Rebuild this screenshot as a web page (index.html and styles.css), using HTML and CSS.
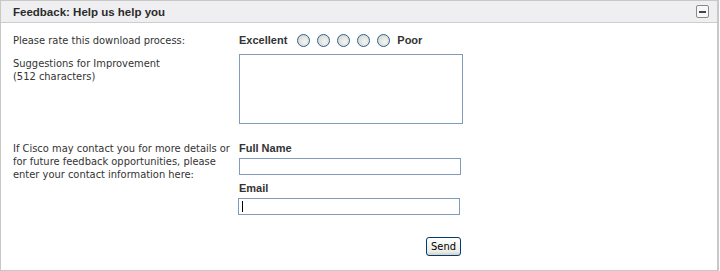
FILE: index.html
```html
<!DOCTYPE html>
<html lang="en">
<head>
    <meta charset="UTF-8">
    <title>Feedback</title>
    <link rel="stylesheet" href="styles.css">
</head>
<body>
    <div class="panel">
        <div class="panel-head">
            <span class="panel-title">Feedback: Help us help you</span>
            <span class="collapse"><span class="minus"></span></span>
        </div>

        <div class="panel-body">
            <div class="row rate-row">
                <div class="label">Please rate this download process:</div>
                <div class="field rating">
                    <b class="excellent">Excellent</b>
                    <input type="radio" name="rate" class="radio">
                    <input type="radio" name="rate" class="radio">
                    <input type="radio" name="rate" class="radio">
                    <input type="radio" name="rate" class="radio">
                    <input type="radio" name="rate" class="radio">
                    <b>Poor</b>
                </div>
            </div>

            <div class="row suggest-row">
                <div class="label">Suggestions for Improvement<br>(512 characters)</div>
                <div class="field"><textarea class="suggest"></textarea></div>
            </div>

            <div class="row contact-row">
                <div class="label">If Cisco may contact you for more details or<br>for future feedback opportunities, please<br>enter your contact information here:</div>
                <div class="field">
                    <div class="field-name">Full Name</div>
                    <input type="text" class="text-in">
                    <div class="field-name email-name">Email</div>
                    <div class="text-in email-in"><span class="caret"></span></div>
                </div>
            </div>

            <div class="row send-row">
                <div class="label"></div>
                <div class="field send-field"><button class="send">Send</button></div>
            </div>
        </div>
    </div>
</body>
</html>
```

FILE: styles.css
```css
body {
    margin: 0;
    font-family: Tahoma, "DejaVu Sans Condensed", "Liberation Sans", sans-serif;
    font-size: 11px;
    color: #333;
    background: #fff;
}
.panel {
    width: 716px;
    height: 269px;
    border: 1px solid #c8c8c8;
    border-right: 2px solid #c8c8c8;
}
.panel-head {
    height: 21px;
    background: #efeff1;
    border-bottom: 1px solid #cdcdcd;
    display: flex;
    align-items: center;
    justify-content: space-between;
    padding: 0 8px 0 12px;
}
.panel-title {
    font-family: "Liberation Sans", Arial, sans-serif;
    font-weight: bold;
    font-size: 11.5px;
    color: #2b2b2b;
}
.collapse {
    width: 11px;
    height: 11px;
    border: 1px solid #8a8a8a;
    border-radius: 2px;
    background: #f7f7f7;
    display: flex;
    align-items: center;
    justify-content: center;
}
.minus {
    width: 7px;
    height: 2px;
    background: #444;
}
.panel-body {
    padding: 8px 0 0 12px;
}
.row {
    display: grid;
    grid-template-columns: 226px 240px;
}
.label {
    line-height: 13px;
    white-space: nowrap;
}
.rate-row {
    align-items: center;
    height: 18px;
}
.rating {
    display: flex;
    align-items: center;
    gap: 7px;
}
.rating b {
    font-family: "Liberation Sans", Arial, sans-serif;
    font-size: 11px;
}
.rating .excellent {
    margin-right: 3px;
}
.radio {
    appearance: none;
    -webkit-appearance: none;
    margin: 0;
    width: 13px;
    height: 13px;
    border: 1px solid #2d5f8f;
    border-radius: 50%;
    background: radial-gradient(circle at 60% 60%, #f4f4f0 0, #dcdcd6 70%, #c6c6c0 100%);
}
.suggest-row {
    margin-top: 5px;
}
.suggest-row .label {
    padding-top: 3px;
}
.suggest {
    display: block;
    width: 224px;
    height: 70px;
    box-sizing: border-box;
    margin: 0;
    border: 1px solid #7f9db9;
    resize: none;
}
.contact-row {
    margin-top: 18px;
}
.field-name {
    font-family: "Liberation Sans", Arial, sans-serif;
    font-weight: bold;
    font-size: 11px;
    height: 15px;
}
.text-in {
    display: block;
    box-sizing: border-box;
    width: 222px;
    height: 17px;
    margin: 1px 0 0;
    border: 1px solid #7f9db9;
    padding: 0;
}
.email-name {
    margin-top: 7px;
}
.email-in {
    margin-left: -1px;
    padding: 2px 0 0 3px;
}
.caret {
    display: block;
    width: 1px;
    height: 11px;
    background: #000;
}
.send-row {
    margin-top: 22px;
}
.send-field {
    display: flex;
    justify-content: flex-end;
    width: 222px;
}
.send {
    font-family: Tahoma, "DejaVu Sans Condensed", sans-serif;
    font-size: 11px;
    color: #000;
    height: 19px;
    padding: 0 4px;
    border: 1px solid #003c74;
    border-radius: 3px;
    background: linear-gradient(#fff, #ecebe6 80%, #d6d0c5);
}
```
